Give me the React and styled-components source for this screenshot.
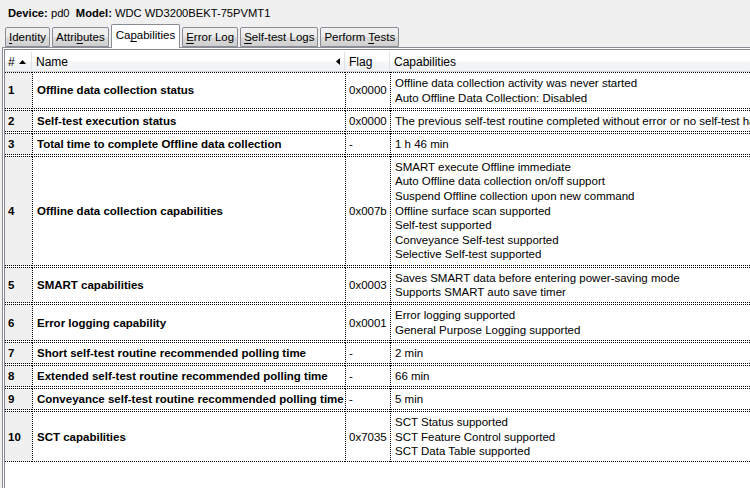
import styled, { createGlobalStyle } from "styled-components";

const GlobalStyle = createGlobalStyle`
  html, body {
    margin: 0;
    padding: 0;
    background: #f0f0f0;
    overflow: hidden;
  }
  body {
    font-family: "Liberation Sans", Arial, sans-serif;
    color: #000;
  }
`;

const Window = styled.div`
  width: 750px;
  height: 488px;
  overflow: hidden;
  display: flex;
  flex-direction: column;
`;

const InfoBar = styled.div`
  height: 24px;
  padding: 6px 0 0 8px;
  box-sizing: border-box;
  font-size: 11.2px;
  line-height: 14px;
  white-space: nowrap;
  b {
    font-weight: bold;
  }
`;

const TabStrip = styled.div`
  display: flex;
  align-items: flex-end;
  height: 23px;
  padding-left: 5px;
  gap: 2px;
  position: relative;
  z-index: 1;
`;

const Tab = styled.div`
  box-sizing: border-box;
  height: ${({ $active }) => ($active ? "24px" : "20px")};
  margin-bottom: ${({ $active }) => ($active ? "-1px" : "0")};
  padding: ${({ $active }) => ($active ? "3px 4px 0" : "2px 3px 0")};
  border: 1px solid #898c95;
  border-bottom: ${({ $active }) => ($active ? "none" : "1px solid #898c95")};
  border-radius: 2px 2px 0 0;
  background: ${({ $active }) =>
    $active ? "#fff" : "linear-gradient(#f2f2f2, #ebebeb 50%, #dddddd 51%, #cfcfcf)"};
  font-size: 11.5px;
  line-height: 15px;
  white-space: nowrap;
  u {
    text-decoration: underline;
    text-underline-offset: 2px;
  }
`;

const Pane = styled.div`
  flex: 1;
  margin-left: 2px;
  border-top: 1px solid #898c95;
  border-left: 1px solid #898c95;
  background: #fff;
  padding: 1px 0 0 1px;
  display: flex;
  min-height: 0;
`;

const Frame = styled.div`
  flex: 1;
  border-top: 1px solid #828790;
  border-left: 1px solid #828790;
  padding-top: 2px;
  overflow: hidden;
  font-size: 11.5px;
`;

const Grid = styled.div`
  display: grid;
  grid-template-columns: 27px 313px 45px 420px;
  width: 805px;
`;

const HeadCell = styled.div`
  display: flex;
  align-items: center;
  height: 20px;
  padding: 0 ${({ $pad }) => $pad ?? 4}px;
  box-sizing: border-box;
  background: linear-gradient(#ffffff, #ffffff 45%, #f4f5f7 55%, #f1f2f4);
  border-right: 1px solid #e1e2e4;
  border-bottom: 1px solid #d5d5d5;
  font-size: 12px;
  white-space: nowrap;
  justify-content: space-between;
`;

const HeadLabel = styled.span`
  display: flex;
  align-items: center;
  gap: 4px;
`;

const Row = styled.div`
  display: contents;
`;

const Cell = styled.div`
  display: flex;
  flex-direction: column;
  justify-content: center;
  padding: 3px ${({ $pad }) => $pad ?? 4}px 2.5px;
  border-top: 1px dotted #000;
  border-bottom: 1px dotted #000;
  margin-bottom: 1px;
  border-left: ${({ $first }) => ($first ? "none" : "1px dotted #000")};
  background: ${({ $first }) => ($first ? "#f0f0f0" : "#fff")};
  font-weight: ${({ $bold }) => ($bold ? "bold" : "normal")};
  line-height: 14.6px;
  white-space: nowrap;
  overflow: hidden;
`;

const Arrow = ({ dir }) =>
  dir === "up" ? (
    <svg width="7" height="4" viewBox="0 0 7 4">
      <polygon points="0,4 3.5,0 7,4" fill="#000" />
    </svg>
  ) : (
    <svg width="4" height="7" viewBox="0 0 4 7">
      <polygon points="4,0 0,3.5 4,7" fill="#000" />
    </svg>
  );

const rows = [
  ["1", "Offline data collection status", "0x0000", ["Offline data collection activity was never started", "Auto Offline Data Collection: Disabled"]],
  ["2", "Self-test execution status", "0x0000", ["The previous self-test routine completed without error or no self-test has ever been run"]],
  ["3", "Total time to complete Offline data collection", "-", ["1 h 46 min"]],
  ["4", "Offline data collection capabilities", "0x007b", [
    "SMART execute Offline immediate",
    "Auto Offline data collection on/off support",
    "Suspend Offline collection upon new command",
    "Offline surface scan supported",
    "Self-test supported",
    "Conveyance Self-test supported",
    "Selective Self-test supported",
  ]],
  ["5", "SMART capabilities", "0x0003", ["Saves SMART data before entering power-saving mode", "Supports SMART auto save timer"]],
  ["6", "Error logging capability", "0x0001", ["Error logging supported", "General Purpose Logging supported"]],
  ["7", "Short self-test routine recommended polling time", "-", ["2 min"]],
  ["8", "Extended self-test routine recommended polling time", "-", ["66 min"]],
  ["9", "Conveyance self-test routine recommended polling time", "-", ["5 min"]],
  ["10", "SCT capabilities", "0x7035", ["SCT Status supported", "SCT Feature Control supported", "SCT Data Table supported"]],
];

export default function App() {
  return (
    <Window>
      <GlobalStyle />
      <InfoBar>
        <b>Device:</b> pd0&nbsp;&nbsp;<b>Model:</b> WDC WD3200BEKT-75PVMT1
      </InfoBar>
      <TabStrip>
        <Tab><u>I</u>dentity</Tab>
        <Tab>Attri<u>b</u>utes</Tab>
        <Tab $active>Ca<u>p</u>abilities</Tab>
        <Tab><u>E</u>rror Log</Tab>
        <Tab><u>S</u>elf-test Logs</Tab>
        <Tab>Perform <u>T</u>ests</Tab>
      </TabStrip>
      <Pane>
        <Frame>
          <Grid>
            <HeadCell $pad={3}>
              <HeadLabel># <Arrow dir="up" /></HeadLabel>
            </HeadCell>
            <HeadCell>
              <HeadLabel>Name</HeadLabel>
              <Arrow dir="left" />
            </HeadCell>
            <HeadCell>Flag</HeadCell>
            <HeadCell>Capabilities</HeadCell>
            {rows.map(([n, name, flag, caps]) => (
              <Row key={n}>
                <Cell $first $bold $pad={3}>{n}</Cell>
                <Cell $bold>{name}</Cell>
                <Cell $pad={3}>{flag}</Cell>
                <Cell>
                  {caps.map((c) => (
                    <span key={c}>{c}</span>
                  ))}
                </Cell>
              </Row>
            ))}
          </Grid>
        </Frame>
      </Pane>
    </Window>
  );
}
